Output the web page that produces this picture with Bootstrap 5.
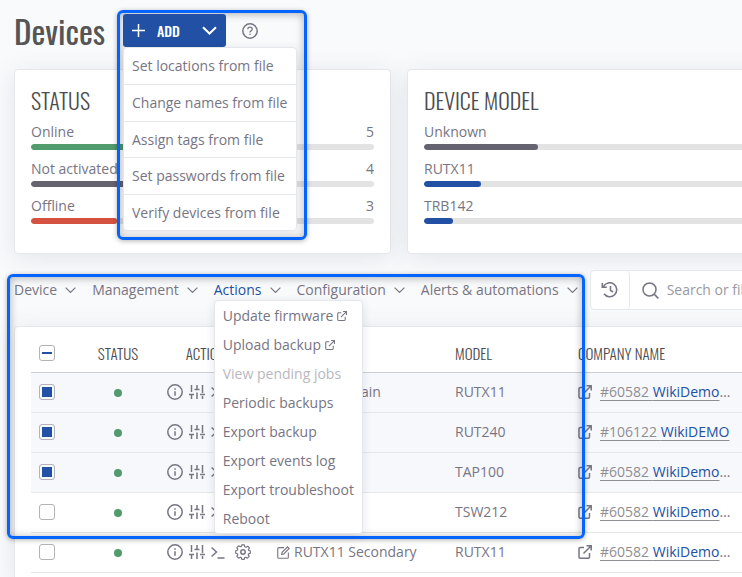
<!DOCTYPE html>
<html lang="en">
<head>
<meta charset="utf-8">
<meta name="viewport" content="width=device-width, initial-scale=1">
<title>Devices</title>
<link href="https://cdn.jsdelivr.net/npm/bootstrap@5.3.0/dist/css/bootstrap.min.css" rel="stylesheet">
<style>
:root { --ink: #777583; --head: #4c4c4e; --brand: #2250a4; --line: #e6e7eb; --frame: #0564ff; }
body { font: 14px/20px "Open Sans", "Noto Sans", sans-serif; color: var(--ink); background: #f9fafc; overflow-x: hidden; }
svg { fill: none; stroke: currentColor; stroke-width: 1.5; flex: none; display: block; }
.page { padding: 14px 0 0 14px; }
.display-font { font-family: Oswald, "Liberation Sans Narrow", "Liberation Sans", sans-serif; color: var(--head); font-weight: 300; margin: 0; }
.page-title { font-size: 33px; line-height: 33px; width: 93px; font-weight: 400; color: #555; }
.panel { background: #fff; border: 1px solid var(--line); border-radius: 4px; box-shadow: 0 4px 24px rgba(60, 75, 100, .12); }
.stats { gap: 16px; margin-top: 22px; }
.stat-panel { flex: 0 0 377px; padding: 18px 16px 20px; }
.stat-panel h2 { font-size: 22px; line-height: 24px; margin-bottom: 10px; }
.stat { margin-bottom: 9px; }
.stat .progress { height: 6px; margin-top: 2px; border-radius: 3px; background: #e3e3e3; }
.stat .progress-bar { border-radius: 3px; background: var(--brand); }
.stat .bar-green { background: #529b6c; }
.stat .bar-grey { background: #656370; }
.stat .bar-red { background: #d4523f; }
.add-group { z-index: 5; margin-left: 16px; }
.add-group .btn { background: var(--brand); color: #fff; border: 0; border-radius: 3px; height: 33px; padding: 0 9px; }
.add-group .btn-label { font-family: Oswald, "Liberation Sans Narrow", "Liberation Sans", sans-serif; font-size: 14px; font-weight: 500; gap: 12px; width: 71px; }
.add-group .btn-arrow { width: 33px; padding: 0 9px; }
.floating { background: #fff; border: 1px solid var(--line); border-radius: 4px; padding: 0; min-width: 0; font-size: 14px; box-shadow: 0 2px 10px rgba(40, 50, 70, .12); }
.floating .dropdown-item { color: var(--ink); padding: 0 8px; line-height: 35px; }
.floating li + li { border-top: 1px solid var(--line); }
.add-menu.show { top: 100%; left: 0; width: 174px; height: 184px; display: grid; grid-auto-rows: 1fr; }
.highlight { position: absolute; border: 3px solid var(--frame); border-radius: 6px; box-shadow: 0 1px 5px rgba(0, 0, 0, .3), inset 0 1px 9px rgba(0, 0, 0, .3); pointer-events: none; }
.add-highlight { inset: -4px -81px -193px -6px; z-index: -1; }
.toolbar { margin-top: 16px; }
.menu-btn { background: none; border: 0; padding: 0; color: inherit; gap: 8px; display: flex; align-items: center; }
.menu-btn.is-open { color: var(--brand); }
.menu-btn.is-open svg { color: var(--ink); }
.menus { gap: 16px; }
.actions-menu { top: 20px; left: 0; width: 149px; z-index: 4; }
.actions-menu .dropdown-item { line-height: 29px; display: flex; align-items: center; gap: 4px; }
.floating.actions-menu li + li { border: 0; }
.actions-menu .dropdown-item.disabled { color: #b9b8be; }
.search-box { margin-left: 12px; height: 40px; background: #fff; border: 1px solid var(--line); border-radius: 4px; flex: 0 0 193px; }
.history-btn { background: none; border: 0; border-right: 1px solid var(--line); border-radius: 4px; color: inherit; width: 39px; height: 38px; padding: 0 10px; }
.search-box input { border: 0; background: none; outline: 0; color: var(--ink); padding: 0; width: 110px; }
.search-box input::placeholder { color: #9a99a2; opacity: 1; }
.device-panel { width: 769px; margin-top: 16px; padding: 8px 16px 0; }
.device-table { table-layout: fixed; width: 100%; margin-bottom: 8px; }
.device-table th, .device-table td { border-bottom: 1px solid var(--line); padding: 0; height: 40px; vertical-align: middle; white-space: nowrap; }
.device-table th { height: 37px; font-size: 15px; border-color: #ccced4; }
.device-table .picked { background: #f7f8fc; }
.device-table .form-check-input { width: 16px; height: 16px; margin: 0 0 0 8px; display: block; border: 1px solid #b3b2b8; border-radius: 3px; background: #fff; box-shadow: none; }
.device-table .form-check-input:checked { background: var(--brand); background-clip: content-box; padding: 2px; border-color: #b3b2b8; }
.device-table .form-check-input:indeterminate { background: linear-gradient(var(--brand), var(--brand)) center / 10px 2px no-repeat #fff; border-color: #b3b2b8; }
.col-pick { width: 45px; } .col-state { width: 84px; } .col-acts { width: 98px; } .col-title { width: 197px; } .col-model { width: 123px; }
.device-table .name-cell { padding-left: 19px; }
.dot { width: 8px; height: 8px; border-radius: 50%; background: #529b6c; display: block; margin: 2px auto 0; }
.icon-btn { background: none; border: 0; padding: 0; color: inherit; }
.acts { padding-left: 7px; gap: 6px; }
.company a { color: #8f8e93; text-decoration: underline; text-underline-offset: 3px; text-decoration-color: #8f8e93; }
.company a span { color: var(--brand); }
.list-highlight { top: 4px; left: -7px; width: 578px; height: 265px; z-index: 3; }
</style>
</head>
<body>
<svg width="0" height="0" class="position-absolute" aria-hidden="true">
  <symbol id="chev" viewBox="0 0 11 6"><path d="M.6.6 5.5 5.4 10.4.6" stroke-width="1.2"/></symbol>
  <symbol id="ext" viewBox="0 0 14 14"><path d="M6 2.5H2.2Q1 2.5 1 3.7V12q0 1.200 1.200 1.200H10.300q1.200 0 1.200-1.200V8M8.500.8H13.200V5.500M13.200.8 5.500 8.500"/></symbol>
  <symbol id="info" viewBox="0 0 16 16"><circle cx="8" cy="8" r="7.200"/><path d="M8 7.200V11.700M8 4.300V5.800"/></symbol>
  <symbol id="sliders" viewBox="0 0 16 16"><path d="M2.500 1V8M2.500 11V15M0 10.500H5M8 1V5M8 8.500V15M5.500 5.500H10.500M13.500 1V9M13.500 12V15M11 10.500H16"/></symbol>
  <symbol id="term" viewBox="0 0 14 14"><path d="M.6 2.500 5.500 7 .6 11.500M6.500 13H13.500"/></symbol>
  <symbol id="gear" viewBox="0 0 16 16"><circle cx="8" cy="8" r="2.200"/><path stroke-linejoin="round" d="M6.700.8H9.300L9.800 2.800 11 3.300 12.800 2.200 14.500 4 13.300 5.700 13.700 6.500 15.300 6.900V9.300L13.700 9.700 13.200 10.800 14.200 12.400 12.400 14.200 10.800 13.200 9.700 13.600 9.200 15.300H6.800L6.300 13.600 5.200 13.200 3.600 14.200 1.800 12.400 2.800 10.800 2.300 9.700.7 9.200V6.800L2.300 6.300 2.800 5.200 1.800 3.600 3.600 1.800 5.200 2.800 6.300 2.400Z" stroke-width="1.200"/></symbol>
  <symbol id="edit" viewBox="0 0 14 14"><path d="M7.500 1.800H2Q.8 1.800.8 3V12q0 1.200 1.200 1.200H11q1.200 0 1.200-1.200V7M5 9.200 5.500 6.800 11.300.9 13.100 2.700 7.300 8.600Z" stroke-width="1.200"/></symbol>
</svg>

<main class="page">
  <header class="d-flex align-items-center">
    <h1 class="display-font page-title">Devices</h1>
    <div class="add-group position-relative d-flex">
      <div class="highlight add-highlight"></div>
      <div class="btn-group">
        <button class="btn btn-label d-flex align-items-center" type="button"><svg width="13" height="13" viewBox="0 0 13 13"><path d="M6.500 0V13M0 6.500H13"/></svg>ADD</button>
        <button class="btn btn-arrow" type="button" aria-label="More add options" aria-expanded="true"><svg width="15" height="9" viewBox="0 0 15 9"><path d="M1 1.200 7.500 7.500 14 1.200" stroke-width="2"/></svg></button>
      </div>
      <ul class="dropdown-menu show floating add-menu">
        <li><a class="dropdown-item" href="#">Set locations from file</a></li>
        <li><a class="dropdown-item" href="#">Change names from file</a></li>
        <li><a class="dropdown-item" href="#">Assign tags from file</a></li>
        <li><a class="dropdown-item" href="#">Set passwords from file</a></li>
        <li><a class="dropdown-item" href="#">Verify devices from file</a></li>
      </ul>
    </div>
    <button class="icon-btn ms-3 position-relative z-1" type="button" aria-label="Help"><svg width="16" height="16" viewBox="0 0 16 16"><circle cx="8" cy="8" r="7.200"/><path d="M5.800 6.300Q5.800 4.200 8 4.200T10.200 6.200Q10.200 7.300 9 7.900 8 8.300 8 9.600M8 10.800V12.100" stroke-width="1.300"/></svg></button>
  </header>

  <section class="stats d-flex">
    <div class="panel stat-panel">
      <h2 class="display-font">STATUS</h2>
      <div class="stat"><div class="d-flex justify-content-between"><span>Online</span><span>5</span></div><div class="progress"><div class="progress-bar bar-green" style="width:41.670%"></div></div></div>
      <div class="stat"><div class="d-flex justify-content-between"><span>Not activated</span><span>4</span></div><div class="progress"><div class="progress-bar bar-grey" style="width:33.330%"></div></div></div>
      <div class="stat"><div class="d-flex justify-content-between"><span>Offline</span><span>3</span></div><div class="progress"><div class="progress-bar bar-red" style="width:25%"></div></div></div>
    </div>
    <div class="panel stat-panel">
      <h2 class="display-font">DEVICE MODEL</h2>
      <div class="stat"><div>Unknown</div><div class="progress"><div class="progress-bar bar-grey" style="width:33.330%"></div></div></div>
      <div class="stat"><div>RUTX11</div><div class="progress"><div class="progress-bar" style="width:16.670%"></div></div></div>
      <div class="stat"><div>TRB142</div><div class="progress"><div class="progress-bar" style="width:8.330%"></div></div></div>
    </div>
  </section>

  <section class="position-relative">
    <div class="toolbar d-flex align-items-center">
      <nav class="menus d-flex" aria-label="Device actions">
        <button class="menu-btn" type="button">Device <svg width="11" height="6"><use href="#chev"/></svg></button>
        <button class="menu-btn" type="button">Management <svg width="11" height="6"><use href="#chev"/></svg></button>
        <div class="position-relative">
          <button class="menu-btn is-open" type="button" aria-expanded="true">Actions <svg width="11" height="6"><use href="#chev"/></svg></button>
          <ul class="dropdown-menu show floating actions-menu">
            <li><a class="dropdown-item" href="#">Update firmware<svg width="10" height="10"><use href="#ext"/></svg></a></li>
            <li><a class="dropdown-item" href="#">Upload backup<svg width="10" height="10"><use href="#ext"/></svg></a></li>
            <li><a class="dropdown-item disabled" href="#" aria-disabled="true">View pending jobs</a></li>
            <li><a class="dropdown-item" href="#">Periodic backups</a></li>
            <li><a class="dropdown-item" href="#">Export backup</a></li>
            <li><a class="dropdown-item" href="#">Export events log</a></li>
            <li><a class="dropdown-item" href="#">Export troubleshoot</a></li>
            <li><a class="dropdown-item" href="#">Reboot</a></li>
          </ul>
        </div>
        <button class="menu-btn" type="button">Configuration <svg width="11" height="6"><use href="#chev"/></svg></button>
        <button class="menu-btn text-nowrap" type="button">Alerts &amp; automations <svg width="11" height="6"><use href="#chev"/></svg></button>
      </nav>
      <div class="search-box d-flex align-items-center">
        <button class="history-btn" type="button" aria-label="Search history"><svg width="18" height="16" viewBox="0 0 18 16"><path d="M2.500 4.500A7 7 0 1 1 3 11.800M1.300 1V5.200H5.800M9.500 4V8.300L12 10" stroke-width="1.600"/></svg></button>
        <label class="d-flex align-items-center ms-2 ps-1 gap-2"><svg width="17" height="17" viewBox="0 0 17 17"><circle cx="7.500" cy="7.500" r="6.500"/><path d="M12 12 16.300 16.300" stroke-width="1.700"/></svg><input type="text" placeholder="Search or filter" aria-label="Search or filter"></label>
      </div>
    </div>

    <div class="panel device-panel">
      <table class="device-table">
        <colgroup><col class="col-pick"><col class="col-state"><col class="col-acts"><col class="col-title"><col class="col-model"><col></colgroup>
        <thead>
          <tr>
            <th><input class="form-check-input" type="checkbox" id="pick-all" aria-label="Select all devices"></th>
            <th class="display-font text-center">STATUS</th><th class="display-font text-center">ACTIONS</th><th class="name-cell" aria-label="Name"></th><th class="display-font">MODEL</th><th class="display-font">COMPANY NAME</th>
          </tr>
        </thead>
        <tbody id="rows"></tbody>
      </table>
    </div>
    <div class="highlight list-highlight"></div>
  </section>
</main>

<script src="https://cdn.jsdelivr.net/npm/bootstrap@5.3.0/dist/js/bootstrap.bundle.min.js"></script>
<script>
const devices = [
  ["RUTX11 Main", "RUTX11", "#60582", "WikiDemo", "…", true],
  ["", "RUT240", "#106122", "WikiDEMO", "", true],
  ["", "TAP100", "#60582", "WikiDemo", "…", true],
  ["", "TSW212", "#60582", "WikiDemo", "…", false],
  ["RUTX11 Secondary", "RUTX11", "#60582", "WikiDemo", "…", false]
];
const icon = (id, w, h) => `<svg width="${w}" height="${h}"><use href="#${id}"/></svg>`;
const action = (label, id, w, h) => `<button class="icon-btn" type="button" aria-label="${label}">${icon(id, w, h)}</button>`;
document.getElementById("rows").innerHTML = devices.map(([name, model, num, company, more, picked]) => `
<tr class="${picked ? "picked" : ""}">
  <td><input class="form-check-input" type="checkbox" aria-label="Select ${name || model}" ${picked ? "checked" : ""}></td>
  <td><span class="dot"></span></td>
  <td><div class="acts d-flex align-items-center">${action("Details", "info", 16, 16)}${action("Settings", "sliders", 16, 16)}${action("Console", "term", 14, 14)}<span class="ms-1 d-flex">${action("Configure", "gear", 16, 16)}</span></div></td>
  <td class="name-cell"><div class="d-flex align-items-center gap-1">${action("Rename", "edit", 13, 13)}<span>${name}</span></div></td>
  <td>${model}</td>
  <td><div class="company d-flex align-items-center gap-2">${icon("ext", 14, 14)}<div><a href="#">${num} <span>${company}</span></a>${more}</div></div></td>
</tr>`).join("");
document.getElementById("pick-all").indeterminate = true;
</script>
</body>
</html>
